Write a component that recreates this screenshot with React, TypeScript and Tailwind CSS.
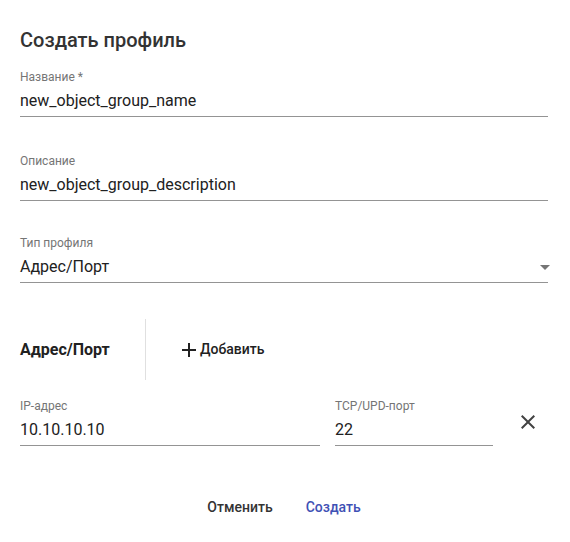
import React from "react";

type FieldProps = {
  label: string;
  value: string;
  className?: string;
  select?: boolean;
};

function Field({ label, value, className = "", select = false }: FieldProps) {
  return (
    <div className={`flex flex-col ${className}`}>
      <div className="h-[16px] pt-[2px] text-[12px] leading-[12px] text-[#757575]">{label}</div>
      <div className="relative pt-[6px] pb-[6px] text-[16px] leading-[19px] text-[#212121] border-b border-[#949494]">
        {value}
        {select && (
          <svg
            className="absolute right-[-9px] top-[4px] w-[24px] h-[24px] text-[#757575]"
            viewBox="0 0 24 24"
            fill="currentColor"
          >
            <path d="M7 10l5 5 5-5z" />
          </svg>
        )}
      </div>
    </div>
  );
}

export default function App() {
  return (
    <div
      className="w-[570px] h-[542px] bg-white flex flex-col pl-[20px] pr-[22px]"
      style={{ fontFamily: "Roboto, 'Liberation Sans', sans-serif" }}
    >
      {/* Title */}
      <h2 className="mt-[24px] h-[32px] text-[20px] leading-[32px] font-medium text-[#333333]">
        Создать профиль
      </h2>

      <Field className="mt-[13px]" label="Название *" value="new_object_group_name" />
      <Field className="mt-[36px]" label="Описание" value="new_object_group_description" />
      <Field className="mt-[34px]" label="Тип профиля" value="Адрес/Порт" select />

      {/* Section header */}
      <div className="mt-[36px] h-[61px] flex items-center">
        <div className="w-[125px] text-[16px] font-bold text-[#212121]">Адрес/Порт</div>
        <div className="w-px h-full bg-[#e0e0e0]" />
        <button className="ml-[31px] flex items-center h-[36px] text-[14px] font-medium text-[#212121]">
          <svg className="w-[24px] h-[24px]" viewBox="0 0 24 24" fill="currentColor">
            <path d="M19 13h-6v6h-2v-6H5v-2h6V5h2v6h6v2z" />
          </svg>
          <span className="-ml-[1px]">Добавить</span>
        </button>
      </div>

      {/* Address row */}
      <div className="mt-[18px] flex items-center">
        <Field className="w-[300px]" label="IP-адрес" value="10.10.10.10" />
        <Field className="ml-[15px] w-[158px]" label="TCP/UPD-порт" value="22" />
        <button className="ml-[23px] mt-[-1px] w-[24px] h-[24px] text-[#424242]">
          <svg className="w-[24px] h-[24px]" viewBox="0 0 24 24" fill="currentColor">
            <path d="M19 6.41L17.59 5 12 10.59 6.41 5 5 6.41 10.59 12 5 17.59 6.41 19 12 13.41 17.59 19 19 17.59 13.41 12z" />
          </svg>
        </button>
      </div>

      {/* Actions */}
      <div className="mt-[43px] flex justify-center gap-[17px]">
        <button className="h-[36px] px-[8px] text-[14px] font-medium text-[#333333]">Отменить</button>
        <button className="h-[36px] px-[8px] text-[14px] font-medium text-[#3f51b5]">Создать</button>
      </div>
    </div>
  );
}
